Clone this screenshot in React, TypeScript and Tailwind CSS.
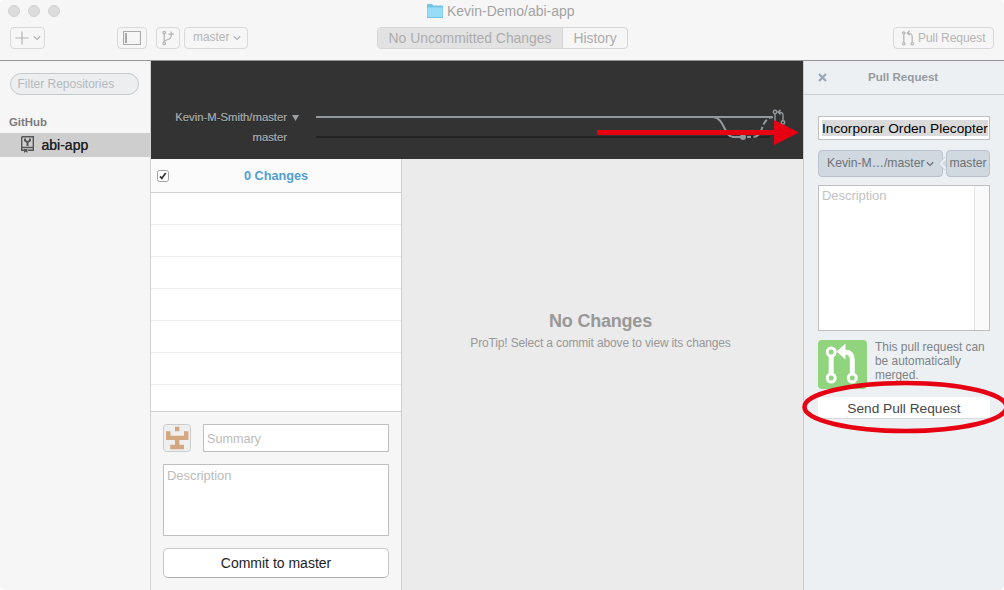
import React from "react";

const Chevron = ({ className = "" }: { className?: string }) => (
  <svg className={className} width="8" height="6" viewBox="0 0 8 6" fill="none" stroke="currentColor" strokeWidth="1.3">
    <path d="M0.8 1.2 4 4.4 7.2 1.2" />
  </svg>
);

const toolButton = "flex h-[22px] shrink-0 items-center rounded-[4px] border border-[#d9d9d9] text-[#b4b4b4]";

function Header() {
  return (
    <header className="h-[61px] shrink-0 border-b border-[#959595] bg-[#f6f6f6]">
      <div className="flex h-[27px]">
        <div className="flex w-[427px] gap-2 pt-[5px] pl-2">
          <i className="size-3 rounded-full border border-[#cfcfcf] bg-[#dcdcdc]" />
          <i className="size-3 rounded-full border border-[#cfcfcf] bg-[#dcdcdc]" />
          <i className="size-3 rounded-full border border-[#cfcfcf] bg-[#dcdcdc]" />
        </div>
        <svg className="mt-1 shrink-0" width="16" height="14" viewBox="0 0 16 14">
          <path d="M0 1Q0 0 1 0H5L6.5 1.5H15Q16 1.5 16 2.5V14H0Z" fill="#74c5e3" />
          <path d="M0.5 3.5H15.5V13H0.5Z" fill="#98ddf7" />
        </svg>
        <h1 className="pt-0.5 pl-1 text-[14px] leading-[18px] text-[#a3a3a3]">Kevin-Demo/abi-app</h1>
      </div>
      <div className="flex pl-2.5">
        <button className={`${toolButton} w-[35px] gap-1 pl-1`}>
          <svg width="14" height="14" viewBox="0 0 14 14" stroke="currentColor" strokeWidth="1.2"><path d="M7 0.5V13.5M0.5 7H13.5" /></svg>
          <Chevron />
        </button>
        <button className={`${toolButton} ml-[72px] w-[30px] justify-center`}>
          <svg width="18" height="14" viewBox="0 0 18 14" fill="none" stroke="#a9a9a9"><path d="M0.5 0.5H17.5V13.5H0.5Z" strokeWidth="1.2" /><path d="M3 2V12" strokeWidth="2" /></svg>
        </button>
        <button className={`${toolButton} ml-[9px] w-6 justify-center`}>
          <svg width="14" height="16" viewBox="0 0 14 16" fill="none" stroke="currentColor" strokeWidth="1.2">
            <circle cx="3.2" cy="2.6" r="1.3" /><circle cx="3.2" cy="13.4" r="1.3" /><path d="M3.2 4V12M3.2 12C3.5 8.5 9.3 11 9.8 7M10.2 1.5V7M7.5 4.2H13" />
          </svg>
        </button>
        <button className={`${toolButton} ml-1 w-16 pl-2`}>
          <span className="w-10 text-left text-[11.9px]">master</span><Chevron />
        </button>
        <div className="ml-[129px] flex h-[22px] w-[251px] shrink-0 overflow-hidden rounded-[4px] border border-[#d5d5d5] text-[13.9px] leading-[21px] text-[#acacac]">
          <span className="w-[185px] border-r border-[#d5d5d5] bg-[#e2e2e2] text-center">No Uncommitted Changes</span>
          <span className="flex-1 text-center">History</span>
        </div>
        <button className={`${toolButton} ml-[265px] w-[101px] pl-2`}>
          <svg width="12" height="16" viewBox="0 0 12 16" fill="none" stroke="currentColor" strokeWidth="1.2">
            <circle cx="1.8" cy="3" r="1.2" /><circle cx="1.8" cy="13.7" r="1.2" /><circle cx="10.2" cy="13.7" r="1.2" />
            <path d="M1.8 4.3V12.4M10.2 12.4V7C10.2 4.5 9 3 5.5 3M7.7 0.8 5.2 3 7.7 5.3" />
          </svg>
          <span className="pl-1 text-[12px] tracking-[-0.05px] whitespace-nowrap">Pull Request</span>
        </button>
      </div>
    </header>
  );
}

function Sidebar() {
  return (
    <aside className="w-[151px] shrink-0 border-r border-[#d2d2d2] bg-[#f6f6f6]">
      <div className="mt-3 ml-2.5 h-[22px] w-[129px] rounded-full border border-[#c5cacd] bg-[#eceef0] pl-[6.5px] text-[12px] leading-[20px] text-[#b5b9bc]">Filter Repositories</div>
      <h2 className="mt-[19px] h-[19px] pl-[9px] text-[11.4px] leading-[16px] font-bold text-[#7b7b7b]">GitHub</h2>
      <div className="flex h-6 items-center bg-[#cecece]">
        <svg className="-mt-0.5 ml-[21px]" width="13" height="17" viewBox="0 0 13 17" fill="none" stroke="#565656">
          <path d="M0.7 0.7H12.3V14.3H7M3 14.3H0.7V0.7M0.7 11.5H12.3" strokeWidth="1.4" />
          <path d="M4 2.5V4.5L6.5 6.2 9 4.5V2.5M6.5 6V10" strokeWidth="2" />
          <path d="M3 13V17L4.7 15.5 6.4 17V13Z" fill="#565656" stroke="none" />
        </svg>
        <span className="pt-px pl-[7.5px] text-[14px] text-[#222] [text-shadow:0_0_0.5px_#222]">abi-app</span>
      </div>
    </aside>
  );
}

function Timeline() {
  return (
    <div className="flex h-[98px] shrink-0 bg-[#333]">
      <div className="w-[165px] pt-[46px] text-right text-[11.3px] text-[#9b9fa2] [text-shadow:0_0_0.5px_#9b9fa2,0_1px_0_#222]">
        <div className="flex h-5 items-center justify-end pr-[17px]">
          Kevin-M-Smith/master
          <svg className="mt-0.5 ml-[5px]" width="7" height="6" viewBox="0 0 7 6" fill="#9b9fa2"><path d="M0 0H7L3.5 6Z" /></svg>
        </div>
        <div className="flex h-5 items-center justify-end pr-[29px]">master</div>
      </div>
      <svg width="487" height="98" viewBox="316 61 487 98" fill="none">
        <path d="M316 137H770" stroke="#232323" strokeWidth="2" />
        <path d="M316 117H772M713 117C725 118 724 137 733 137H741" stroke="#92989b" strokeWidth="2" />
        <path d="M747 137H751" stroke="#92989b" strokeWidth="2" />
        <path d="M753.5 137C765 136 759 119 773 117" stroke="#92989b" strokeWidth="2" strokeDasharray="6 2.5" />
        <circle cx="743" cy="137" r="3" fill="#92989b" />
        <g stroke="#92989b" strokeWidth="1.4">
          <circle cx="775" cy="112" r="1.7" /><circle cx="783" cy="122.5" r="1.7" /><path d="M775 114V124M783 120.5V115Q783 112 778 112M780.5 109.7 778 112 780.5 114.5" />
        </g>
      </svg>
    </div>
  );
}

function Changes() {
  return (
    <section className="flex w-[251px] shrink-0 flex-col border-r border-[#cfcfcf] bg-[#f6f6f6]">
      <div className="flex h-[34px] items-center border-b border-[#d3d3d3] bg-[#fbfbfb]">
        <svg className="ml-1.5" width="12" height="12" viewBox="0 0 12 12" fill="none">
          <rect x="0.5" y="0.5" width="11" height="11" rx="2" fill="#fff" stroke="#a2a2a2" /><path d="M3 6.4 4.8 8.4 8.7 3" stroke="#333" strokeWidth="1.7" />
        </svg>
        <span className="flex-1 pt-[3px] pr-[18px] text-center text-[12.7px] font-bold text-[#4f9fd2]">0 Changes</span>
      </div>
      <div className="h-[219px] border-b border-[#d0d0d0] bg-white">
        {[0, 1, 2, 3, 4, 5].map((n) => <div key={n} className="h-8 border-b border-[#efefef]" />)}
      </div>
      <div className="flex flex-col gap-3 p-3">
        <div className="flex gap-3">
          <svg width="28" height="28" viewBox="0 0 28 28">
            <rect x="0.5" y="0.5" width="27" height="27" rx="3" fill="#efefef" stroke="#ccc" />
            <path d="M12 2.8H16.4V7.2H12ZM3 7.2H7.5V11.7H21V7.2H25.4V16H16.4V20.8H21V25.2H7.2V20.8H12V16H3Z" fill="#d3a77f" />
          </svg>
          <div className="h-7 flex-1 border border-[#bfbfbf] bg-white pl-[3px] text-[12.6px] leading-[28px] text-[#bcbcbc]">Summary</div>
        </div>
        <div className="h-[72px] border border-[#bfbfbf] bg-white pl-[3px] text-[13px] leading-[22px] tracking-[-0.05px] text-[#bcbcbc]">Description</div>
        <button className="h-[30px] rounded-[5px] border border-[#c6c6c6] border-b-[#adadad] bg-white pb-px text-[14px] leading-[26px] text-[#1d1d1d]">Commit to master</button>
      </div>
    </section>
  );
}

function PullRequest() {
  return (
    <aside className="flex w-[201px] shrink-0 flex-col border-l border-[#c7cbce] bg-[#ecf0f3]">
      <div className="flex h-[34px] items-center border-b border-[#c9cdd0]">
        <svg className="ml-3.5" width="9" height="9" viewBox="0 0 9 9" stroke="#94a8b7" strokeWidth="2.2"><path d="M1 1 8 8M8 1 1 8" /></svg>
        <span className="-mt-px pl-[41px] text-[11.6px] font-bold whitespace-nowrap text-[#969a9d]">Pull Request</span>
      </div>
      <div className="mt-[21px] ml-3.5 h-6 w-[172px] border border-[#bfbfbf] bg-white px-[3px] pt-[3px]">
        <div className="h-4 w-[166px] overflow-hidden bg-[#dadada] text-[13.7px] leading-[17px] whitespace-nowrap text-black">Incorporar Orden Plecopter</div>
      </div>
      <div className="mt-2.5 ml-3.5 flex h-[27px] w-[172px] text-[12.2px] text-[#6d7276]">
        <div className="flex w-[125px] items-center rounded-[4px] border border-[#b9c3cd] bg-[#d0d8e0] pl-2">
          <span className="w-[99px] whitespace-nowrap">Kevin-M…/master</span><Chevron />
        </div>
        <svg className="-ml-1" width="8" height="27" viewBox="0 0 8 27">
          <path d="M7.5 7.5 1.5 13.5 7.5 19.5" fill="#d0d8e0" stroke="#ecf0f3" strokeWidth="2.2" /><path d="M6 7 0 13.5 6 20" fill="none" stroke="#b9c3cd" strokeWidth="0.7" />
        </svg>
        <div className="-ml-px flex w-11 items-center justify-center rounded-[4px] border border-[#b9c3cd] bg-[#d0d8e0]">master</div>
      </div>
      <div className="mt-2 ml-3.5 flex h-[146px] w-[172px] justify-between border border-[#bfbfbf] bg-white pl-[3px] text-[13px] leading-[20px] tracking-[-0.05px] text-[#c2c2c2]">
        <span>Description</span><i className="w-[15px] border-l border-[#e6e6e6] bg-[#fafafa]" />
      </div>
      <div className="mt-[9px] ml-3.5 flex h-[49px]">
        <svg className="shrink-0" width="49" height="49" viewBox="0 0 49 49" fill="none">
          <rect width="49" height="49" rx="4" fill="#90d47d" />
          <g stroke="#fff"><path d="M13.2 16V33M34.3 33V20Q34.3 12 27 12" strokeWidth="5" /><circle cx="13.2" cy="12" r="4" strokeWidth="3" /><circle cx="13.2" cy="38" r="4" strokeWidth="3" /><circle cx="34.3" cy="38" r="4" strokeWidth="3" /></g>
          <path d="M27.5 3.5V19.5L18.5 11.5Z" fill="#fff" />
        </svg>
        <p className="pl-2 text-[11.9px] leading-[14px] whitespace-nowrap text-[#7f8386]">This pull request can<br />be automatically<br />merged.</p>
      </div>
      <button className="mt-2 ml-3.5 h-[22px] w-[172px] rounded-[4px] border-b border-[#d5d9dc] bg-white pt-0.5 text-[13.7px] leading-[20px] text-[#464646]">Send Pull Request</button>
    </aside>
  );
}

export default function App() {
  return (
    <div className="relative flex h-[590px] w-[1004px] flex-col overflow-hidden rounded-[5px] bg-[#f6f6f6] font-['Liberation_Sans',Arial,sans-serif]">
      <Header />
      <main className="flex min-h-0 flex-1">
        <Sidebar />
        <div className="flex w-[652px] shrink-0 flex-col">
          <Timeline />
          <div className="flex flex-1">
            <Changes />
            <section className="flex-1 bg-[#ebebeb] pt-[151px] pr-1 text-center text-[#989898]">
              <h2 className="text-[18px] leading-[22px] font-bold tracking-[-0.2px]">No Changes</h2>
              <p className="mt-1 text-[12px] leading-[14px] tracking-[-0.15px]">ProTip! Select a commit above to view its changes</p>
            </section>
          </div>
        </div>
        <PullRequest />
      </main>
      <svg className="pointer-events-none absolute inset-0" width="1004" height="590" viewBox="0 0 1004 590" fill="none">
        <path d="M597 130H774V120L799 132.5 774 145V135H597Z" fill="#e60012" />
        <ellipse cx="905.5" cy="407" rx="101" ry="24" stroke="#e60012" strokeWidth="4.5" />
      </svg>
    </div>
  );
}
